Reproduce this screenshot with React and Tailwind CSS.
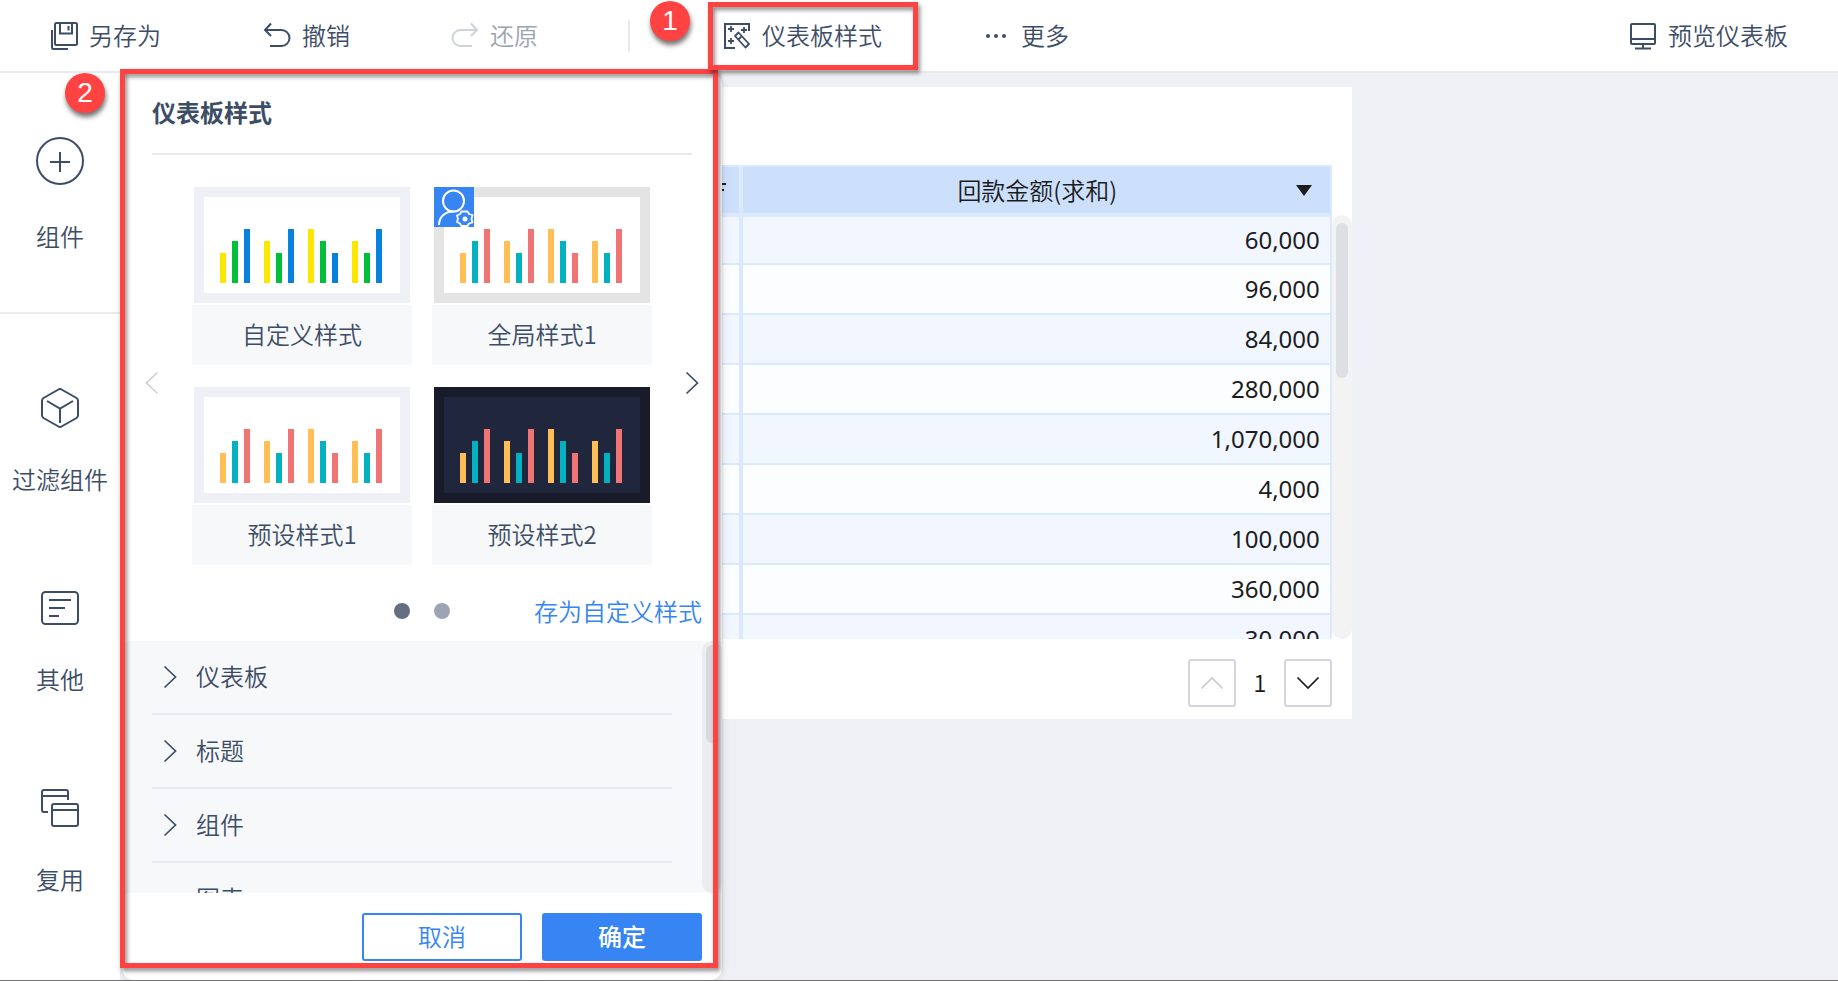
import { useState } from "react";

const styles = [
  { name: "自定义样式", frame: "bg-[#eff0f5]", inner: "bg-white", bars: ["bg-[#fae800]", "bg-[#00c03a]", "bg-[#0681de]"] },
  { name: "全局样式1", frame: "bg-[#e4e4e4]", inner: "bg-white", bars: ["bg-[#ffbf54]", "bg-[#03b1c1]", "bg-[#f17475]"], shared: true },
  { name: "预设样式1", frame: "bg-[#eff0f5]", inner: "bg-white", bars: ["bg-[#ffbf54]", "bg-[#03b1c1]", "bg-[#f17475]"] },
  { name: "预设样式2", frame: "bg-[#191b2a]", inner: "bg-[#20263b]", bars: ["bg-[#ffbf54]", "bg-[#03b1c1]", "bg-[#f17475]"] },
];

const barHeights = [
  [30, 42, 54],
  [42, 30, 54],
  [54, 42, 30],
  [42, 30, 54],
];

const amounts = ["60,000", "96,000", "84,000", "280,000", "1,070,000", "4,000", "100,000", "360,000", "30,000"];
const sections = ["仪表板", "标题", "组件", "图表"];

function Icon({ size = 28, children, className = "" }) {
  return (
    <svg width={size} height={size} viewBox={`0 0 ${size} ${size}`} fill="none" stroke="currentColor" strokeWidth="2" className={`shrink-0 ${className}`} aria-hidden="true">
      {children}
    </svg>
  );
}

function Chevron({ dir, className = "" }) {
  const paths = {
    left: "M17.5 1.5 6.5 12l11 10.5",
    right: "M6.5 1.5 17.5 12l-11 10.5",
    up: "M1.5 17.5 12 7l10.5 10.5",
    down: "M1.5 6.5 12 17l10.5-10.5",
  };
  return (
    <Icon size={24} className={className}>
      <path d={paths[dir]} strokeWidth="1.7" />
    </Icon>
  );
}

function Badge({ children, className }) {
  return (
    <span className={`absolute z-30 flex size-10 items-center justify-center rounded-full bg-[#ff4343] font-['Liberation_Sans',sans-serif] text-[28px] leading-none font-normal text-white shadow-[1px_4px_5px_rgba(0,0,0,0.55)] ${className}`}>
      {children}
    </span>
  );
}

function ToolButton({ label, className = "", disabled, children }) {
  return (
    <button className={`flex items-center gap-[11px] ${className}`} disabled={disabled}>
      {children}
      <span className="pb-0.5">{label}</span>
    </button>
  );
}

function Toolbar() {
  return (
    <header className="relative flex h-[73px] shrink-0 items-center border-b-2 border-[#e8eaed] bg-white px-[50px]">
      <ToolButton label="另存为">
        <Icon>
          <rect x="5" y="1" width="22" height="22" rx="1.500" />
          <path d="M10 1v10.500h12V1M18.500 4v4.500M2 8v17.500q0 1.500 1.500 1.500H18" />
        </Icon>
      </ToolButton>
      <ToolButton label="撤销" className="ml-[102px]">
        <Icon>
          <path d="M8 1.500 2 8l6 6M2 8h16.500a8 8 0 0 1 0 16H7" />
        </Icon>
      </ToolButton>
      <ToolButton label="还原" className="ml-[101px] text-[#9ba3b1]" disabled>
        <Icon className="text-[#ced3d9]">
          <path d="m20 1.500 6 6.500-6 6M26 8H9.500a8 8 0 0 0 0 16H21" />
        </Icon>
      </ToolButton>
      <span className="ml-[90px] h-8 w-0.5 bg-[#e8eaed]" />
      <div className="relative ml-[93px]">
        <ToolButton label="仪表板样式">
          <Icon>
            <path d="M26 9V2H2v24h10" />
            <path d="M5 7h6M8 4v6M18 8h6M21 5v6M5 19h6M8 16v6" strokeWidth="1.800" />
            <path d="m12 14 3.500-3.500L26 22l-3.500 3.500zM15.500 17.500l3.500-3.500" strokeWidth="1.800" strokeLinejoin="round" />
          </Icon>
        </ToolButton>
        <span className="pointer-events-none absolute -top-[15px] -right-9 -left-[15px] z-30 h-[68px] border-[5px] border-[#ff4343] drop-shadow-[2px_3px_2px_rgba(0,0,0,0.45)]" />
        <Badge className="-top-4 -left-[73px]">1</Badge>
      </div>
      <ToolButton label="更多" className="ml-[100px]">
        <Icon>
          <g fill="currentColor" stroke="none">
            <circle cx="6" cy="14" r="2" />
            <circle cx="14" cy="14" r="2" />
            <circle cx="22" cy="14" r="2" />
          </g>
        </Icon>
      </ToolButton>
      <ToolButton label="预览仪表板" className="ml-auto">
        <Icon>
          <rect x="2" y="2" width="24" height="20" rx="1" />
          <path d="M2 17h24M14 22v4M6 26.500h16" />
        </Icon>
      </ToolButton>
    </header>
  );
}

function SideItem({ label, size, children }) {
  return (
    <button className="flex w-full flex-col items-center gap-[33px]">
      <Icon size={size}>{children}</Icon>
      <span>{label}</span>
    </button>
  );
}

function Sidebar() {
  return (
    <nav className="w-[120px] shrink-0 bg-white">
      <div className="h-[241px] border-b-2 border-[#e8eaed] pt-16">
        <SideItem label="组件" size={48}>
          <circle cx="24" cy="24" r="23" />
          <path d="M14 25h20M24 15v20" />
        </SideItem>
      </div>
      <div className="flex flex-col gap-[91px] pt-[74px]">
        <SideItem label="过滤组件" size={40}>
          <path d="M18.500 1.500q1.500-1 3 0l15 8.500q1.500 1 1.500 2.500v15q0 1.500-1.500 2.500l-15 8.500q-1.500 1-3 0l-15-8.500Q2 29 2 27.500v-15Q2 11 3.500 10zM7 13l13 7.500L33 13M20 20.500V35" />
        </SideItem>
        <SideItem label="其他" size={40}>
          <rect x="2" y="4" width="36" height="32" rx="3.500" />
          <path d="M9 12h22M9 20h16M9 28h10" />
        </SideItem>
        <SideItem label="复用" size={40}>
          <path d="M28 12V4q0-2-2-2H4Q2 2 2 4v18q0 2 2 2h4M2 8h26" />
          <rect x="12" y="16" width="26" height="22" rx="2" />
          <path d="M12 22h26" />
        </SideItem>
      </div>
    </nav>
  );
}

function StyleCard({ style }) {
  return (
    <button className="relative flex w-[220px] flex-col items-center gap-0.5">
      <span className={`block w-[216px] p-2.5 ${style.frame}`}>
        <span className={`flex h-24 items-end gap-3.5 pb-2.5 pl-4 ${style.inner}`}>
          {barHeights.map((group, i) => (
            <span key={i} className="flex items-end gap-1.5">
              {group.map((h, j) => (
                <span key={j} className={`w-1.5 ${style.bars[j]}`} style={{ height: h }} />
              ))}
            </span>
          ))}
        </span>
      </span>
      <span className="flex h-[60px] w-full items-center justify-center bg-[#f7f8fa] pb-0.5">{style.name}</span>
      {style.shared && (
        <span className="absolute top-0 left-0.5 size-10 bg-[#3685f2] text-white">
          <Icon size={40}>
            <circle cx="19.500" cy="14" r="10.500" />
            <path d="M5 38c0-8 6-13.500 14.500-13.500" />
            <path d="M27.500 24.500h6l1.500 2.500 3.500 1-1 4 1 3.500-3.500 1-1.500 2.500h-6L26 36.500 23 35l1-3-1-3.500 3-1.500z" strokeWidth="1.800" strokeLinejoin="round" />
            <circle cx="31" cy="32" r="2.500" fill="currentColor" stroke="none" />
          </Icon>
        </span>
      )}
    </button>
  );
}

function StylePanel() {
  const [page, setPage] = useState(0);

  return (
    <section className="absolute top-0 bottom-0 left-0.5 z-20 flex w-[600px] flex-col rounded-xl bg-white shadow-[0_0_8px_rgba(0,0,0,0.12)]">
      <h2 className="mx-[30px] h-[82px] border-b-2 border-[#e8eaed] pt-[21px] font-bold">仪表板样式</h2>
      <div className="mt-8 flex items-center justify-between px-[18px]">
        <button aria-label="上一页" className="mt-3.5 text-[#ced1d9]">
          <Chevron dir="left" />
        </button>
        <div className="grid grid-cols-2 gap-x-5 gap-y-[22px]">
          {styles.map((style) => (
            <StyleCard key={style.name} style={style} />
          ))}
        </div>
        <button aria-label="下一页" className="mt-3.5">
          <Chevron dir="right" />
        </button>
      </div>
      <div className="flex h-[76px] items-center justify-between pt-4 pr-5 pl-[272px]">
        <div className="flex gap-6">
          {[0, 1].map((i) => (
            <button key={i} aria-label={`第${i + 1}页`} onClick={() => setPage(i)} className={`size-4 rounded-full ${page === i ? "bg-[#646f84]" : "bg-[#9ea5b2]"}`} />
          ))}
        </div>
        <a href="#save" className="text-[#3685f2]">存为自定义样式</a>
      </div>
      <div className="flex h-[252px] overflow-hidden bg-[#f7f8fa]">
        <div className="flex-1 px-[30px]">
          {sections.map((name) => (
            <button key={name} className="group flex h-[74px] w-full items-center gap-3.5 border-b-2 border-[#e8e9ec] pl-1.5">
              <Chevron dir="right" className="group-last:invisible" />
              <span className="pb-0.5">{name}</span>
            </button>
          ))}
        </div>
        <div className="w-5 rounded-full bg-[#ecedf0] p-1">
          <div className="h-[98px] w-3 rounded-full bg-[#d9dadf]" />
        </div>
      </div>
      <div className="flex justify-end gap-5 pt-5 pr-5">
        <button className="h-12 w-40 rounded-[3px] border-2 border-[#3685f2] pb-0.5 text-[#3685f2]">取消</button>
        <button className="h-12 w-40 rounded-[3px] bg-[#3685f2] pb-0.5 font-medium text-white">确定</button>
      </div>
      <span className="pointer-events-none absolute -top-1 right-1 bottom-3 -left-0.5 z-30 border-[5px] border-[#ff4343] drop-shadow-[2px_3px_2px_rgba(0,0,0,0.45)]" />
      <Badge className="top-0 -left-[57px]">2</Badge>
    </section>
  );
}

function Widget() {
  return (
    <section className="mt-3.5 ml-3 flex w-[71%] flex-col bg-white pt-[78px] pb-3">
      <div className="flex h-[474px] overflow-hidden pl-4">
        <div className="min-w-0 flex-1">
          <table className="w-full table-fixed border-separate border-spacing-0 border-r-2 border-[#dae9fd] text-[#1c1c1c]">
            <thead>
              <tr className="h-[52px] bg-[#cce0fc]">
                <th className="w-1/2 border-t-2 border-b-4 border-[#dae9fd] p-0 pr-[13px] font-normal">
                  <svg width="20" height="16" viewBox="0 0 20 16" stroke="currentColor" strokeWidth="2" className="ml-auto" aria-hidden="true">
                    <path d="M8 2h12M8 8h10M8 14h8" />
                  </svg>
                </th>
                <th className="w-1/2 border-t-2 border-b-4 border-l-4 border-[#dae9fd] p-0 font-[350]">
                  <span className="flex items-center pr-[18px] pl-9">
                    <span className="flex-1">回款金额(求和)</span>
                    <svg width="16" height="11" viewBox="0 0 16 11" fill="currentColor" aria-hidden="true">
                      <path d="M0 0h16L8 11z" />
                    </svg>
                  </span>
                </th>
              </tr>
            </thead>
            <tbody>
              {amounts.map((amount, i) => (
                <tr key={amount} className={i % 2 ? "h-[50px] bg-[#fbfdff]" : "h-[50px] bg-[#f1f6ff] first:h-12"}>
                  <td className="border-b-2 border-[#dae9fd] p-0" />
                  <td className="border-b-2 border-l-4 border-[#dae9fd] p-0 pr-2.5 text-right font-['Noto_Sans','Noto_Sans_CJK_SC',sans-serif] font-normal">{amount}</td>
                </tr>
              ))}
            </tbody>
          </table>
        </div>
        <div className="mt-[50px] w-5 rounded-full bg-[#f3f3f3] px-1 pt-2">
          <div className="h-[155px] w-3 rounded-full bg-[#dddfe4]" />
        </div>
      </div>
      <div className="flex items-center justify-end pt-5 pr-5 text-[#1c1c1c]">
        <button aria-label="上一页" className="flex size-12 items-center justify-center rounded-[3px] border-2 border-[#d3d6db] text-[#cbcbcb]">
          <Chevron dir="up" />
        </button>
        <span className="w-12 pb-0.5 text-center">1</span>
        <button aria-label="下一页" className="flex size-12 items-center justify-center rounded-[3px] border-2 border-[#d3d6db]">
          <Chevron dir="down" />
        </button>
      </div>
    </section>
  );
}

export default function App() {
  return (
    <div className="flex h-screen flex-col overflow-hidden border-b border-[#707070] bg-[#eff0f5] font-['Noto_Sans_CJK_SC',sans-serif] text-[24px] leading-9 font-[350] text-[#3d4d66]">
      <Toolbar />
      <div className="flex min-h-0 flex-1">
        <Sidebar />
        <main className="relative flex-1">
          <Widget />
          <StylePanel />
        </main>
      </div>
    </div>
  );
}
